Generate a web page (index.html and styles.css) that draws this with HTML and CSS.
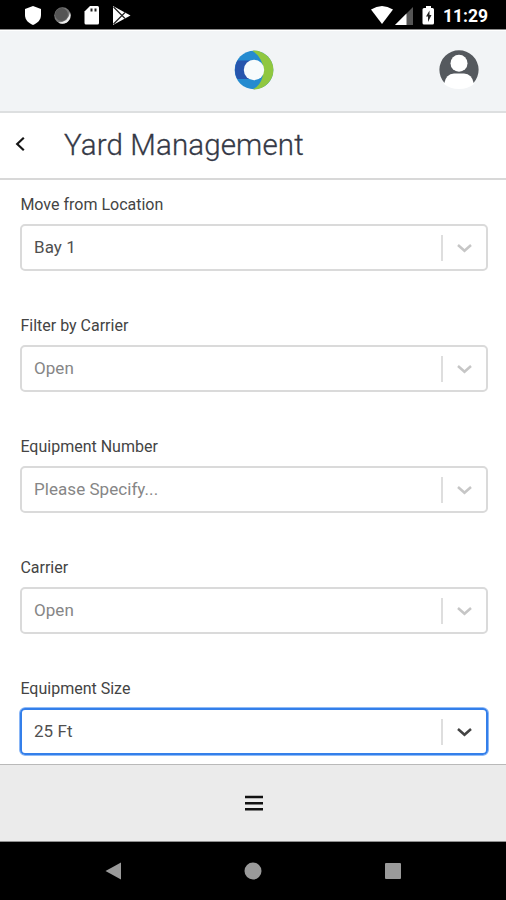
FILE: index.html
```html
<!DOCTYPE html>
<html lang="en">
<head>
<meta charset="utf-8">
<title>Yard Management</title>
<link rel="stylesheet" href="styles.css">
</head>
<body>
<div class="screen">
  <div class="status">
    <svg class="status-left" width="140" height="29" viewBox="0 0 140 29">
      <path fill="#fff" d="M33 6l8 3v6c0 5-3.500 8-8 10-4.500-2-8-5-8-10V9z"/>
      <circle cx="62.500" cy="15.500" r="8.300" fill="#777"/>
      <path fill="#eee" d="M70 12Q72 18 67 22.500 62 25 58 22.500 69 22 70 12z"/>
      <circle cx="61.500" cy="14.500" r="6.500" fill="#555"/>
      <path fill="#fff" d="M90 6h7.500q1.500 0 1.500 1.500V23q0 1.500-1.500 1.500h-11.500q-1.500 0-1.500-1.500V11.500z"/>
      <path stroke="#222" stroke-width="2" d="M91.500 8.500v3M95.500 8.500v3"/>
      <path fill="#fff" d="M113 6l17.500 9.500L113 25z"/>
      <path fill="none" stroke="#222" stroke-width="1.200" d="M113.500 7l11.500 11.500M113.500 24L125 12.500"/>
    </svg>
    <div class="status-right">
      <svg width="65" height="29" viewBox="0 0 65 29">
        <path fill="#fff" d="M0 9.500Q11 2.500 22 9.500L11 24z"/>
        <path fill="#555" d="M42 7v18H24z"/>
        <path fill="#fff" d="M35.500 13.500v11.500H24z"/>
        <path fill="#fff" d="M55 6h5v2h1.500q1.500 0 1.500 1.500V23q0 1.500-1.500 1.500h-8.500q-1.500 0-1.500-1.500V9.500Q51.500 8 53 8h2z"/>
        <path fill="#222" d="M58.500 10.500l-3.500 6h2V22l3.500-7h-2z"/>
      </svg>
      <span class="clock">11:29</span>
    </div>
  </div>
  <header class="brand">
    <svg class="logo" width="40" height="40" viewBox="0 0 40 40">
      <circle cx="20" cy="20" r="19.300" fill="#258bd0"/>
      <path fill="#90c740" d="M19.500 .6A19.400 19.400 0 0 1 20.500 39.400L19 39Q26 36 28.500 27V14Q26 6 18.500 1z"/>
      <path fill="#2755ad" d="M3.300 10.500h14V29H3.300Q-1.500 20 3.300 10.500z"/>
      <circle cx="20" cy="20" r="10.200" fill="#f7fbfc"/>
    </svg>
    <svg class="avatar" width="40" height="40" viewBox="0 0 40 40">
      <path fill="#55595e" d="M5.500 33A19.600 19.600 0 1 1 34.500 33z"/>
      <circle cx="20" cy="13.300" r="8.500" fill="#fff"/>
      <path fill="#fff" d="M5 34Q7 23.500 15 23.500h10q8 0 10 10.500Q29 39 20 39T5 34z"/>
    </svg>
  </header>
  <div class="titlebar">
    <svg class="back" width="10" height="16" viewBox="0 0 10 16"><path fill="none" stroke="#151515" stroke-width="2.200" d="M8.800 1.800L2.200 8l6.600 6.200"/></svg>
    <h1 class="title">Yard Management</h1>
  </div>
  <main class="form">
    <div class="field">
      <div class="label">Move from Location</div>
      <div class="select"><span class="value">Bay 1</span><i class="divider"></i><svg class="chevron" width="16" height="10" viewBox="0 0 16 10"><path d="M1 2l6.500 5.800L14 2"/></svg></div>
    </div>
    <div class="field">
      <div class="label">Filter by Carrier</div>
      <div class="select"><span class="value placeholder">Open</span><i class="divider"></i><svg class="chevron" width="16" height="10" viewBox="0 0 16 10"><path d="M1 2l6.500 5.800L14 2"/></svg></div>
    </div>
    <div class="field">
      <div class="label">Equipment Number</div>
      <div class="select"><span class="value placeholder">Please Specify...</span><i class="divider"></i><svg class="chevron" width="16" height="10" viewBox="0 0 16 10"><path d="M1 2l6.500 5.800L14 2"/></svg></div>
    </div>
    <div class="field">
      <div class="label">Carrier</div>
      <div class="select"><span class="value placeholder">Open</span><i class="divider"></i><svg class="chevron" width="16" height="10" viewBox="0 0 16 10"><path d="M1 2l6.500 5.800L14 2"/></svg></div>
    </div>
    <div class="field">
      <div class="label">Equipment Size</div>
      <div class="select focused"><span class="value">25 Ft</span><i class="divider"></i><svg class="chevron" width="16" height="10" viewBox="0 0 16 10"><path d="M1 2l6.500 5.800L14 2"/></svg></div>
    </div>
  </main>
  <footer class="menu">
    <svg width="18" height="16" viewBox="0 0 18 16"><path stroke="#111" stroke-width="2.400" d="M0 2h18M0 8.200h18M0 14.200h18"/></svg>
  </footer>
  <nav class="system">
    <svg width="18" height="18" viewBox="0 0 18 18"><path fill="#9a9a9a" d="M17 .5v17L1.500 9z"/></svg>
    <svg width="18" height="18" viewBox="0 0 18 18"><circle cx="9" cy="9" r="8.500" fill="#9a9a9a"/></svg>
    <svg width="18" height="18" viewBox="0 0 18 18"><rect x="1" y="1" width="16" height="16" rx="1" fill="#9a9a9a"/></svg>
  </nav>
</div>
</body>
</html>
```
FILE: styles.css
```css
* { box-sizing: border-box; }
body { margin: 0; background: #fff; font-family: Roboto, sans-serif; }
svg { display: block; flex: none; }
.screen { width: 506px; height: 900px; display: flex; flex-direction: column; overflow: hidden; }
.status { height: 30px; flex: none; background: #000; border-bottom: 1px solid #8c8c8c; display: flex; justify-content: space-between; }
.status-right { display: flex; padding-right: 17px; }
.clock { width: 46px; margin-left: 7px; color: #fff; font-size: 17.5px; font-weight: 700; line-height: 32px; white-space: nowrap; }
.brand { height: 83px; flex: none; background: #f2f4f6; border-top: 1px solid #fff; border-bottom: 2px solid #dddfe0; display: grid; grid-template-columns: 1fr 40px 1fr; align-items: center; padding-bottom: 2px; }
.logo { grid-column: 2; margin-left: 1px; }
.avatar { justify-self: end; margin-right: 27px; }
.titlebar { height: 67px; flex: none; border-bottom: 2px solid #d8d8d8; display: flex; align-items: center; padding-left: 15px; }
.back { margin-top: -3px; }
.title { margin: -2px 0 0 39px; color: #353946; font-size: 29.5px; font-weight: 300; line-height: 36px; letter-spacing: .13px; -webkit-text-stroke: .3px #353946; white-space: nowrap; }
.form { height: 584px; flex: none; padding: 15px 18px 0 20px; }
.field { height: 121px; }
.label { height: 29px; color: #444; font-size: 16px; line-height: 20px; padding-left: .4px; white-space: nowrap; }
.select { height: 47px; border: 2px solid #dadada; border-radius: 5px; display: flex; align-items: center; padding: 0 13px 0 12px; }
.value { flex: 1; color: #505050; font-size: 17px; line-height: 20px; letter-spacing: .05px; padding-bottom: 2px; }
.placeholder { color: #868686; }
.divider { width: 2px; height: 26px; background: #dedede; margin-right: 14px; }
.chevron { margin-top: 1px; }
.chevron path { fill: none; stroke: #c6c6c6; stroke-width: 2.5; }
.focused { border-color: #347fea; box-shadow: 0 0 0 .8px #6da6f5; }
.focused .chevron path { stroke: #444; }
.menu { height: 78px; flex: none; background: #ebebeb; border-top: 1px solid #b9b9b9; border-bottom: 1px solid #8f8f8f; display: flex; align-items: center; justify-content: center; padding-left: 2px; }
.system { height: 58px; flex: none; background: #000; display: flex; align-items: center; justify-content: space-between; padding: 0 104px; }
```
